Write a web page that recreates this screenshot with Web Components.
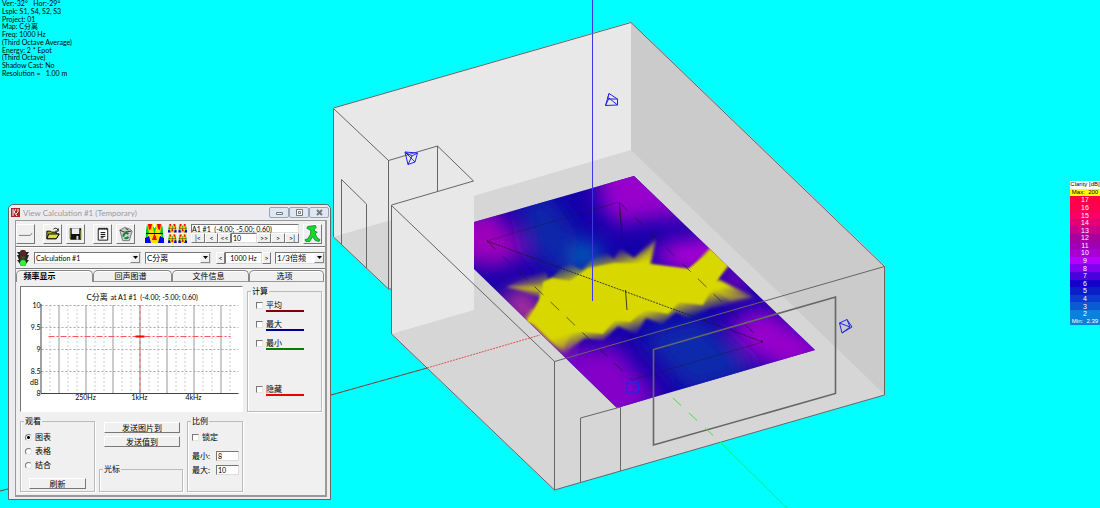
<!DOCTYPE html>
<html lang="zh-CN">
<head>
<meta charset="utf-8">
<title>View Calculation</title>
<style>
  html, body { height: 100%; margin: 0; }
  body {
    position: relative; overflow: hidden; background: #0ff; color: #000;
    font: 7px/10px Lato, "Noto Sans CJK SC", sans-serif;
  }
  room-scene { position: absolute; inset: 0; }
  info-readout { position: absolute; left: 2px; top: 0; }
  color-legend { position: absolute; right: 0; top: 181px; }
  calc-window { position: absolute; left: 8px; bottom: 8px; }
</style>
</head>
<body>
<room-scene></room-scene>
<info-readout>
  <span>Ver:-32° &nbsp; Hor:-29°</span><span>Lspk: S1, S4, S2, S3</span><span>Project: 01</span><span>Map: C分离</span><span>Freq: 1000 Hz</span><span>(Third Octave Average)</span><span>Energy: 2 * Epot</span><span>(Third Octave)</span><span>Shadow Cast: No</span><span>Resolution = &nbsp; 1.00 m</span>
</info-readout>
<color-legend></color-legend>
<calc-window></calc-window>

<script>
const define = (name, html) => customElements.define(name, class extends HTMLElement {
  constructor() {
    super();
    this.attachShadow({ mode: 'open' });
  }
  connectedCallback() {
    this.shadowRoot.innerHTML = typeof html === 'function' ? html(this) : html;
  }
});

define('info-readout', `
  <style>
    :host { display: grid; grid-auto-rows: 1fr; height: 77px; align-items: center; white-space: nowrap; line-height: 7px; }
  </style><slot></slot>`);

const stops = [[17,'#ff0048'],[16,'#ff0050'],[15,'#fa0064'],[14,'#e60078'],[13,'#c8008c'],[12,'#a800a0'],[11,'#a000b4'],[10,'#a800d2'],[9,'#b400ff'],[8,'#8200f0'],[7,'#4b00dc'],[6,'#1400c8'],[5,'#0a1ec8'],[4,'#0a3cd2'],[3,'#0a5ad2'],[2,'#0a82dc']];
define('color-legend', `
  <style>
    :host { display: grid; grid-auto-rows: 1fr; width: 30px; height: 144px; font: 6px/7px "Liberation Sans", sans-serif; text-align: center; color: #fff; white-space: nowrap; }
    div { display: grid; align-content: center; }
    .title { background: #fff; color: #000; }
    .max { background: #ff0; color: #000; }
    .min { background: #0a82dc; }
    .num { font-size: 7px; }
  </style>
  <div class="title">Clarity [dB]</div><div class="max">Max: &nbsp;200</div>
  ${stops.map(([v, c]) => `<div class="num" style="background:${c}">${v}</div>`).join('')}
  <div class="min">Min: &nbsp;2.39</div>`);

define('room-scene', `
  <style>
    :host { display: block; overflow: hidden; }
    svg { display: block; width: 100%; height: 100%; }
    .edge { fill: none; stroke: #666; stroke-width: 1; }
    .cam { fill: none; stroke: #2222e8; stroke-width: 1; stroke-linejoin: round; }
  </style>
  <svg viewBox="0 0 1100 508" preserveAspectRatio="xMinYMin slice" role="img" aria-label="Room model with clarity map">
    <defs>
      <clipPath id="map"><path d="M474 222L634 176L815 350L617 408L474 269Z"/></clipPath>
      <filter id="soft" x="-30%" y="-30%" width="160%" height="160%"><feGaussianBlur stdDeviation="10"/></filter>
      <filter id="fringe"><feGaussianBlur stdDeviation="1.5"/></filter>
      <filter id="crisp"><feGaussianBlur stdDeviation=".8"/></filter>
      <linearGradient id="up" gradientUnits="userSpaceOnUse" x1="600" y1="254" x2="606" y2="274"><stop stop-color="#d8d800" stop-opacity="0"/><stop offset="1" stop-color="#d8d800"/></linearGradient>
      <linearGradient id="down" gradientUnits="userSpaceOnUse" x1="652" y1="330" x2="646" y2="310"><stop stop-color="#d8d800" stop-opacity="0"/><stop offset="1" stop-color="#d8d800"/></linearGradient>
    </defs>
    <path fill="#d6d6d6" d="M333 108L631 22L885 266V395L554 490L391 334V289H388L333 237Z"/>
    <path fill="#e8e8e8" d="M333 108L631 22V150L333 237Z"/>
    <path fill="#cbcbcb" d="M631 22L885 266V395L631 150Z"/>
    <path fill="#e8e8e8" d="M391 205L474 181V310L391 334Z"/>
    <g clip-path="url(#map)">
      <path fill="#1400aa" d="M460 170H820V410H460Z"/>
      <g filter="url(#soft)">
        <path fill="#0c26aa" d="M520 200L550 195L595 260L560 275L530 250Z"/>
        <path fill="#0068b8" d="M575 248L596 242L602 262L575 272Z"/>
        <path fill="#0a2cac" d="M640 335L700 318L755 372L690 392Z"/>
        <path fill="#9800cc" d="M598 165L650 160L690 220L650 218L620 226L600 205Z"/>
        <path fill="#9c00bc" d="M455 215L492 208L520 240L526 256L492 268L455 258Z"/>
        <path fill="#ac00d4" d="M650 258L668 243L715 236L728 256L690 275Z"/>
        <path fill="#b0309a" d="M495 300L530 285L545 320L575 352L550 352Z"/>
        <path fill="#8400c8" d="M560 352L615 345L660 400L615 430L560 370Z"/>
        <path fill="#9800cc" d="M728 320L765 308L840 355L790 372L745 352Z"/>
        <path fill="#a400c0" d="M725 272L738 266L752 290L728 288Z"/>
      </g>
      <g filter="url(#fringe)">
        <path fill="url(#up)" d="M506 288L524 277L545 270L549 280L568 263L582 270L602 249L614 259L620 248L634 258L657 237L650 264L690 270L712 246L735 258L700 300L540 310L540 292Z"/>
        <path fill="url(#down)" d="M526 318L562 322L600 300L720 280L735 288L760 299L733 304L711 308L688 318L676 312L662 324L646 318L636 334L618 326L603 340L585 338L563 354Z"/>
        <path fill="#d8d800" opacity=".4" d="M506 286L540 297L544 285ZM575 328L563 349L550 341L564 328ZM712 289L752 297L730 301ZM524 318L532 308L548 326ZM700 262L712 252L728 262ZM636 264L655 241L651 264Z"/>
      </g>
      <path filter="url(#crisp)" fill="#d8d800" d="M614 263L640 264L688 269L703 258L727 264L712 288L703 305L679 302L668 314L645 309L630 322L615 320L603 334L573 331L526 322L542 295L543 282L552 278L570 281L588 268Z"/>
    </g>
    <g fill="none" stroke="#181820">
      <path stroke-dasharray="2 1" opacity=".8" d="M487 241L763 342"/>
      <path stroke-dasharray="1 1" opacity=".7" d="M487 241L619 202M632 380L763 342"/>
      <path stroke-dasharray="12 10" opacity=".6" d="M487 241L632 380M619 202L763 342"/>
      <path opacity=".8" d="M619.500 203L622 238M625.500 290L627 310"/>
    </g>
    <path stroke="#3a3ae0" fill="none" d="M592.500 0V301"/>
    <g class="edge">
      <path d="M333.500 108L631 22.500L884.500 266.500V395L554.500 490L391.500 334V205L473.500 181L437.500 146L388.500 160.500L333.500 108.500V237L388.500 289H391"/>
      <path d="M391.500 205.500L554.500 361.500L884.500 266.500M554.500 361V490M388.500 160V289M437.500 146V191"/>
      <path d="M341.500 244V179.500L366.500 204V268M580.500 482V418L620.500 407V471"/>
      <path stroke-width="1.6" d="M653.500 445V349.500L835.500 297V393.500Z"/>
    </g>
    <path stroke="#7a3a3a" fill="none" d="M0 491L8 489M331 395L427 368"/>
    <path stroke="#e05050" fill="none" stroke-dasharray="2 1" d="M427 368L540 335"/>
    <path stroke="#40e040" fill="none" stroke-dasharray="11 11" d="M673 398L720 442"/>
    <path stroke="#00f080" fill="none" d="M720 442L787 508"/>
    <g class="cam">
      <path d="M605.500 105.500L609 93.500L617.500 99V105ZM605.500 105.500L609 98L617.500 105M609 93.500L607.500 99L617.500 99"/>
      <path d="M405 152L417.500 153L415 162L408 164.500ZM405 152L415 162M408 164.500L412 156L417.500 153M405 152L412 156"/>
      <path d="M839.500 323L847 319.500L852 327L842 333ZM839.500 323L850 327M847 319.500L850 327L842 333"/>
      <path d="M627 382H638.500V393H627ZM627 382L638 393M638.500 382L627 393M633 381L638 382"/>
    </g>
  </svg>`);

define('tool-button', host => `
  <style>
    :host { display: block; width: 19px; height: 20px; }
    button { display: grid; place-items: center; box-sizing: border-box; width: 100%; height: 100%; padding: 0; background: #f0f0f0; border: 1px solid; border-color: #fff #777 #777 #fff; font: inherit; line-height: 8px; color: inherit; white-space: nowrap; }
    :host([flat]) button { border: 0; }
  </style><button type="button" aria-label="${host.getAttribute('label') || host.textContent.trim()}"><slot></slot></button>`);

define('drop-list', host => `
  <style>
    :host { display: grid; grid-template-columns: 1fr 10px; height: 12px; box-sizing: border-box; background: #fff; border: 1px solid; border-color: #777 #ddd #ddd #777; }
    select { appearance: none; grid-area: 1 / 1 / 2 / 3; min-width: 0; width: 100%; padding: 0 0 0 1px; border: 0; background: none; font: inherit; line-height: 10px; color: inherit; }
    span { grid-area: 1 / 2; pointer-events: none; background: #f0f0f0; border: 1px solid; border-color: #fff #888 #888 #fff; display: grid; place-items: center; }
    svg { width: 5px; height: 3px; }
  </style>
  <select aria-label="${host.getAttribute('label')}"><option>${host.getAttribute('value')}</option></select>
  <span><svg viewBox="0 0 5 3"><path d="M0 0H5L2.500 3Z"/></svg></span>`);

define('group-box', host => `
  <style>
    :host { display: grid; }
    fieldset { min-width: 0; box-sizing: border-box; margin: 0; padding: 0 4px; border: 1px solid #bbb; box-shadow: inset 1px 0 #fff, 1px 1px #fff; }
    legend { padding: 0 1px; margin-left: -1px; line-height: 10px; }
  </style><fieldset><legend>${host.getAttribute('label')}</legend><slot></slot></fieldset>`);

define('mark-option', host => `
  <style>
    :host { display: block; }
    label { display: grid; grid-template-columns: 10px auto 1fr; align-items: center; line-height: 10px; white-space: nowrap; }
    input { appearance: none; box-sizing: border-box; width: 7px; height: 7px; margin: 0; background: #fff; border: 1px solid; border-color: #777 #e4e4e4 #e4e4e4 #777; }
    input[type=radio] { border-radius: 50%; }
    input[type=radio]:checked { background: radial-gradient(circle, #000 0 1px, #fff 2px); }
    i { grid-column: 2 / 4; height: 2px; background: ${host.getAttribute('color') || 'none'}; width: 38px; }
  </style>
  <label><input type="${host.getAttribute('type') || 'checkbox'}" name="view" ${host.hasAttribute('checked') ? 'checked' : ''}><slot></slot>${host.hasAttribute('color') ? '<i></i>' : ''}</label>`);

const solid = [58, 85, 112, 166, 193, 220], dashed = [49, 67, 76, 94, 103, 121, 130, 148, 157, 175, 184, 202, 211, 229];
define('level-chart', `
  <style>
    :host { display: block; background: #fff; border: 1px solid; border-color: #777 #fff #fff #777; box-sizing: border-box; }
    svg { display: block; width: 100%; height: 100%; }
    text { font: inherit; }
    .e { text-anchor: end; } .m { text-anchor: middle; }
  </style>
  <svg viewBox="21 288 220 124" role="img" aria-label="Level chart" fill="none">
    <path stroke="#ccc" stroke-dasharray="2 2" d="${dashed.map(x => `M${x}.500 306V394`).join('')}"/>
    <path stroke="#aaa" stroke-dasharray="2 2" d="M41 306.500H238M41 328.500H238M41 350.500H238M41 372.500H238"/>
    <path stroke="#999" d="${solid.map(x => `M${x}.500 306V394`).join('')}"/>
    <path stroke="#444" d="M40.500 305V394.500H238"/>
    <path stroke="#977" d="M139.500 306V394"/>
    <path stroke="#f55" stroke-dasharray="6 2 2 2" d="M48 337.500H230"/>
    <path stroke="#f44" stroke-dasharray="3 3" opacity=".6" d="M139.500 306V394"/>
    <path stroke="#f00" stroke-width="2" d="M135 337.500H144"/>
    <g fill="#000">
      <text x="86" y="301" style="font-size:8px">C分离</text><text x="110" y="301">at A1 #1 &#160;(-4.00; -5.00; 0.60)</text>
      <g class="e"><text x="40" y="309">10</text><text x="40" y="331">9.5</text><text x="40" y="353">9</text><text x="40" y="375">8.5</text><text x="38" y="386">dB</text><text x="40" y="397">8</text></g>
      <g class="m"><text x="85" y="401">250Hz</text><text x="139" y="401">1kHz</text><text x="193" y="401">4kHz</text></g>
    </g>
  </svg>`);

const heat = `<path fill="#fd0" d="M1 0H18L19 19H0Z"/><path fill="#f00" d="M3 0H7L6 5L4 6ZM12 0H16L15 6L13 5ZM9.500 9L12 16H7Z"/><path fill="#0c3" d="M1 0H2L4 9L1 14ZM18 0H17L15 9L18 14ZM8 3H11L10 9H9Z"/><path fill="#00f" d="M0 14L4 12L6 19H0ZM19 14L15 12L13 19H19Z"/><path fill="#fff" d="M0 0H2L0 12ZM19 0H17L19 12ZM8 0H11L10 4H9Z"/><path fill="none" stroke="#000" d="M1 9.500H18"/>`;
define('calc-window', `
  <style>
    :host { display: grid; grid-template-rows: 15px 1fr; box-sizing: border-box; width: 323px; height: 296px; padding: 0 2px 2px; border: 1px solid #666; border-radius: 5px 5px 0 0; background: #ececf0; }
    header { display: flex; align-items: center; gap: 3px; color: #999; font-size: 8px; line-height: 12px; white-space: nowrap; }
    h1 { flex: 1; margin: 0; font: inherit; }
    header div { display: flex; }
    header svg { width: 9px; height: 9px; }
    header button { display: grid; place-items: center; box-sizing: border-box; width: 20px; height: 11px; padding: 0; background: #dfe8f2; border: 1px solid #98a4b4; border-radius: 2px; }
    main { display: grid; grid-template-rows: 26px 22px 13px 1fr; margin: 0 2px 0 4px; border: 1px solid #999; border-width: 1px 2px 2px 1px; background: #f0f0f0; min-height: 0; }
    .bar { display: flex; align-items: center; border-bottom: 1px solid #777; box-shadow: 0 1px #fff; }
    .tools { gap: 4px; }
    .gap { margin-left: 4px; }
    .gap[flat] { margin-left: 6px; }
    tool-button svg { display: block; width: 17px; height: 18px; }
    tool-button[flat] svg { width: 19px; height: 19px; }
    .nav { display: grid; grid-template-columns: 14px 13px 13px 26px 14px 14px 14px; grid-template-rows: 9px 10px; }
    .nav output { grid-column: 1 / -1; }
    output { display: block; box-sizing: border-box; background: #fff; border: 1px solid; border-color: #777 #ddd #ddd #777; line-height: 8px; white-space: nowrap; }
    .nav tool-button { width: auto; height: 10px; }
    input { box-sizing: border-box; min-width: 0; width: 100%; margin: 0; padding: 0 1px; background: #fff; border: 1px solid; border-color: #777 #ddd #ddd #777; border-radius: 0; font: inherit; font-size: 7px; line-height: 8px; color: inherit; }
    .freq { display: grid; grid-template-columns: 9px 37px 9px; height: 12px; margin: 0 4px 0 5px; }
    .freq tool-button { width: auto; height: 12px; }
    .freq output { text-align: center; line-height: 10px; }
    .cjk, nav, .body { font-size: 8px; }
    nav { display: grid; grid-template-columns: 77px 79px 77px 1fr; padding: 1px 1px 0 0; }
    nav button { padding: 0 4px 0 0; border: 1px solid #888; border-bottom-color: #999; border-radius: 5px 5px 0 0; background: #f0f0f0; font: inherit; line-height: 9px; color: inherit; box-shadow: inset 0 1px #fff; }
    nav button[aria-selected=true] { font-weight: bold; padding-right: 30px; border-bottom: 0; }
    .body { display: grid; grid-template: 126px 76px / 223px 75px; gap: 4px 4px; padding: 4px 0 0 4px; align-content: start; }
    level-chart { font-size: 7px; }
    .top { display: grid; }
    .calc { display: grid; gap: 7px; padding: 4px 0 0 4px; }
    .calc :last-child { margin-top: 27px; }
    .low { display: grid; grid-template-columns: 75px 84px 56px; gap: 0 4px; align-items: stretch; }
    .mid { display: grid; grid-template-rows: 11px 11px 1fr; gap: 3px; padding-top: 6px; }
    .mid tool-button { width: 76px; height: 11px; margin-left: 5px; }
    .mid group-box { margin-top: 14px; }
    .views { display: grid; gap: 4px; padding-top: 6px; }
    .views tool-button { width: 57px; height: 11px; margin: 4px 0 0 4px; }
    .scale { display: grid; grid-template-columns: 20px 23px; gap: 4px; row-gap: 4px; padding-top: 6px; align-items: center; white-space: nowrap; }
    .scale mark-option { grid-column: 1 / 3; margin-bottom: 5px; }
    .scale input { height: 10px; }
    .light { width: 12px; height: 16px; margin: 0 5px 0 1px; }
  </style>
  <header>
    <svg viewBox="0 0 9 9"><rect width="9" height="9" fill="#a22"/><path d="M2 1V8M5 1L3 4L6 8M7 1V4L5 6" stroke="#fff" fill="none"/></svg>
    <h1>View Calculation #1 (Temporary)</h1>
    <div>
      <button type="button" aria-label="Minimize"><svg viewBox="0 0 9 9"><path d="M1.500 4.500H7.500V6.500H1.500Z" stroke="#777" fill="#fff"/></svg></button>
      <button type="button" aria-label="Maximize"><svg viewBox="0 0 9 9"><path d="M1.500 1.500H7.500V7.500H1.500ZM3.500 3.500H5.500V5.500H3.500Z" stroke="#777" fill="#fff"/></svg></button>
      <button type="button" aria-label="Close"><svg viewBox="0 0 9 9"><path d="M2 2L7 7M7 2L2 7" stroke="#777" stroke-width="2"/></svg></button>
    </div>
  </header>
  <main>
    <div class="bar tools">
      <tool-button label="Line"><svg viewBox="0 0 18 18"><path d="M2 10.500H14L16 8" stroke="#777" fill="none"/></svg></tool-button>
      <tool-button class="gap" label="Open"><svg viewBox="0 0 18 18"><path d="M3 14V6H7L8 7H13V9H16L13 14Z" fill="#aa2" stroke="#000"/><path d="M5 9H16L13 14H3Z" fill="#dd4" stroke="#000"/><path d="M10 4C12 2 14 3 15 5M15 3V6H12" stroke="#000" fill="none"/></svg></tool-button>
      <tool-button label="Save"><svg viewBox="0 0 18 18"><path d="M3 3H15V15H4L3 14Z" fill="#111"/><path d="M5 3H13V9H5Z" fill="#eee"/><path d="M3.500 4V14M14.500 5V14" stroke="#882"/><path d="M10 11H12V15H10Z" fill="#ddd"/></svg></tool-button>
      <tool-button class="gap" label="Notes"><svg viewBox="0 0 18 18"><path d="M4.500 3.500H14.500V15.500H4.500Z" fill="#fff" stroke="#111"/><path d="M5 3.500H14" stroke="#000" stroke-width="2" stroke-dasharray="1 1"/><path d="M7 7.500H12M7 9.500H12M7 11.500H12M7 13H10" stroke="#000"/></svg></tool-button>
      <tool-button label="Recycle"><svg viewBox="0 0 18 18"><path d="M3 5L8 2L14 4L16 6L13 16H6Z" fill="#ccc" stroke="#777"/><path d="M3 5L8 7L15 6M9 3L12 5" stroke="#333" fill="none"/><path d="M7 12A3 3 0 0 1 12 9M12 12A3 3 0 0 1 8 13" stroke="#083" stroke-width="2" fill="none"/></svg></tool-button>
      <tool-button class="gap" flat label="Map"><svg viewBox="0 0 19 19">${heat}</svg></tool-button>
      <tool-button flat label="All maps"><svg viewBox="0 0 42 42"><g>${heat}</g><g transform="translate(23)">${heat}</g><g transform="translate(0 23)">${heat}</g><g transform="translate(23 23)">${heat}</g></svg></tool-button>
      <div class="nav">
        <output>A1 #1 &nbsp;(-4.00; -5.00; 0.60)</output>
        <tool-button>|&lt;</tool-button><tool-button>&lt;</tool-button><tool-button>&lt;&lt;</tool-button><input aria-label="Step" value="10"><tool-button>&gt;&gt;</tool-button><tool-button>&gt;</tool-button><tool-button>&gt;|</tool-button>
      </div>
      <tool-button label="Run"><svg viewBox="0 0 18 18"><path d="M4 1L12 0L13 2L11 4V6L14 7L12 9L14 13L17 15L16 17L12 16L9 12L6 17H2L1 15L4 14L7 9V5L3 3Z" fill="#1d2" stroke="#063" stroke-width=".7"/></svg></tool-button>
    </div>
    <div class="bar">
      <svg class="light" viewBox="0 0 12 16"><path d="M0 2H12L10 5H12L10 10H12L9 14H3L0 10H2L0 5H2Z" fill="#222"/><rect x="3" width="6" height="16" rx="2" fill="#333"/><circle cx="6" cy="3" r="2" fill="#811"/><circle cx="6" cy="8" r="2" fill="#541"/><circle cx="6" cy="13" r="3" fill="#2f3"/></svg>
      <drop-list style="width:107px" label="Calculation" value="Calculation #1"></drop-list>
      <drop-list class="cjk" style="width:66px;margin-left:4px" label="Map" value="C分离"></drop-list>
      <div class="freq"><tool-button>&lt;</tool-button><output>1000 Hz</output><tool-button>&gt;</tool-button></div>
      <drop-list class="cjk" style="width:50px" label="Band" value="1/3倍频"></drop-list>
    </div>
    <nav role="tablist"><button role="tab" aria-selected="true">频率显示</button><button role="tab">回声图谱</button><button role="tab">文件信息</button><button role="tab">选项</button></nav>
    <div class="body">
      <level-chart></level-chart>
      <group-box class="top" label="计算"><div class="calc">
        <mark-option color="#800000">平均</mark-option><mark-option color="#000090">最大</mark-option><mark-option color="#008000">最小</mark-option><mark-option color="#f00000">隐藏</mark-option>
      </div></group-box>
      <div class="low">
        <group-box label="观看"><div class="views">
          <mark-option type="radio" checked>图表</mark-option><mark-option type="radio">表格</mark-option><mark-option type="radio">结合</mark-option>
          <tool-button>刷新</tool-button>
        </div></group-box>
        <div class="mid"><tool-button>发送图片到</tool-button><tool-button>发送值到</tool-button><group-box label="光标"></group-box></div>
        <group-box label="比例"><div class="scale">
          <mark-option>锁定</mark-option>
          <label for="lo">最小:</label><input id="lo" value="8"><label for="hi">最大:</label><input id="hi" value="10">
        </div></group-box>
      </div>
    </div>
  </main>`);
</script>
</body>
</html>
